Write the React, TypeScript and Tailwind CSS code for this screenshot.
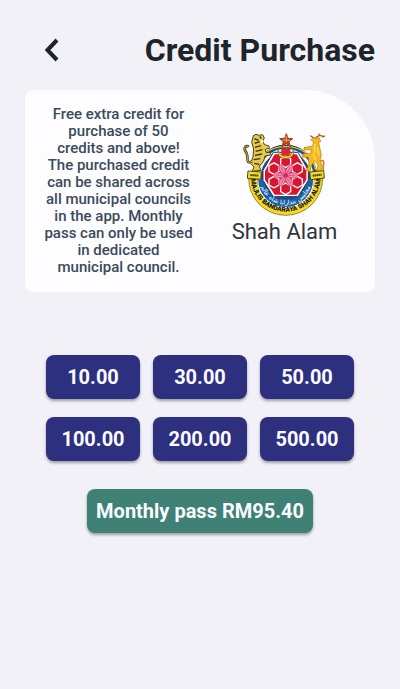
const amounts = ['10.00', '30.00', '50.00', '100.00', '200.00', '500.00'];

const notice = [
  'Free extra credit for',
  'purchase of 50',
  'credits and above!',
  'The purchased credit',
  'can be shared across',
  'all municipal councils',
  'in the app. Monthly',
  'pass can only be used',
  'in dedicated',
  'municipal council.',
];

const petals = [0, 60, 120, 180, 240, 300];

function Crest() {
  return (
    <svg viewBox="33 21 264 255" className="h-[85px] w-[88px]" role="img" aria-label="Majlis Bandaraya Shah Alam crest">
      <defs>
        <path id="motto" d="M62 152 A105 105 0 1 0 272 152" />
        <path id="jawi" d="M89 158 A78 78 0 0 0 245 158" />
      </defs>
      {/* shield rings */}
      <circle cx="167" cy="150" r="92" fill="#174f93" stroke="#172a3d" strokeWidth="4" />
      <circle cx="167" cy="152" r="79" fill="none" stroke="#f4f5ef" strokeWidth="9" />
      <path d="M78 132 C86 87 116 63 167 61 C218 63 248 87 257 132" fill="none" stroke="#e5c820" strokeWidth="4" />
      <path d="M56 157 A111 111 0 0 0 278 157 L252 157 A85 85 0 0 1 82 157Z" fill="#f7d921" stroke="#5b5524" strokeWidth="2" />
      <path d="M84 162 A83 83 0 0 0 250 162" fill="none" stroke="#fff" strokeWidth="4" />
      <path d="M94 160 A73 73 0 0 0 240 160" fill="none" stroke="#1764ab" strokeWidth="19" />
      {/* hexagonal field */}
      <path d="M130 79 H204 L235 133 V163 L204 212 H130 L99 163 V133Z" fill="#fff" stroke="#20365b" strokeWidth="3" strokeLinejoin="round" />
      <path d="M134 85 H200 L229 135 V161 L200 206 H134 L105 161 V135Z" fill="#d91632" strokeLinejoin="round" />
      <g fill="none" stroke="#fff" strokeWidth="4">
        {petals.map((a) => (
          <path key={a} transform={`rotate(${a} 167 148)`} d="M167 125 L152 116 V99 L167 90 L182 99 V116Z" />
        ))}
      </g>
      {petals.map((a) => (
        <g key={a} transform={`rotate(${a + 30} 167 148)`}>
          <ellipse cx="167" cy="128" rx="8" ry="16" fill="#f58aae" stroke="#c62e61" strokeWidth="2" />
          <path d="M167 143V120" stroke="#d8396d" strokeWidth="2" />
        </g>
      ))}
      <circle cx="167" cy="148" r="6" fill="#cf2860" />
      {/* crescent and star */}
      <path d="M145 68 C145 98 190 98 190 68 C202 107 133 108 145 68Z" fill="#f2dd27" stroke="#745d1d" strokeWidth="2" />
      <path d="M154 67H181V83Q167 91 154 83Z" fill="#d9243a" />
      <path d="M169 23 L174 37 L188 38 L177 47 L181 62 L169 53 L156 62 L160 47 L149 38 L164 37Z" fill="#d73422" stroke="#8c4c2b" strokeWidth="3" />
      <path d="M169 30V49M158 42L180 43" stroke="#f3b14c" strokeWidth="3" />
      {/* tiger supporter */}
      <path d="M70 29 L78 25 88 28 98 26 103 36 98 46 104 56 117 60 118 67 106 70 108 79 122 80 122 87 105 90 101 105 88 121 93 133 66 136 72 123 62 112 69 92 71 69 65 49Z" fill="#e6c947" stroke="#4c4424" strokeWidth="3" />
      <path d="M66 106 C43 117 59 91 47 77 C39 65 50 56 56 63" fill="none" stroke="#4c4424" strokeWidth="8" />
      <path d="M66 106 C43 117 59 91 47 77 C39 65 50 56 56 63" fill="none" stroke="#d6b743" strokeWidth="3" />
      <path d="M73 38l13 5M74 52l15-5M75 64l18-5M77 76l20-5M75 88l21-4M71 101l20-3M73 112l15 3M89 31l5 7" fill="none" stroke="#353424" strokeWidth="4" />
      <path d="M92 43l7-3v11l-8 1Z" fill="#fff5bd" />
      {/* deer supporter */}
      <path d="M242 42 L250 35 268 36 272 46 266 50 270 69 274 86 270 104 277 120 271 138 261 132 264 117 254 104 244 119 240 137 228 134 237 116 235 94 216 93 220 83 241 83 245 71 222 72 222 65 248 60 251 48Z" fill="#f5b91f" stroke="#ad7612" strokeWidth="2" />
      <path d="M251 36 241 29 M257 35 269 28 280 31M269 29l-3-6M276 33l9-3" fill="none" stroke="#a36a24" strokeWidth="4" />
      <path d="M270 105 C292 97 274 128 281 135" fill="none" stroke="#c98c1b" strokeWidth="5" />
      <path d="M254 54v26M249 85l9 19M263 65l4 23" fill="none" stroke="#ffe062" strokeWidth="4" />
      {/* side ribbons */}
      <path d="M54 135 L94 138 92 160 52 157Z" fill="#f6db22" stroke="#514a20" strokeWidth="3" />
      <path d="M239 138 L281 134 283 156 242 161Z" fill="#f6db22" stroke="#514a20" strokeWidth="3" />
      <path d="M61 147 L86 149 M248 149 L275 146" stroke="#4a4325" strokeWidth="6" strokeDasharray="5 1" />
      <text fill="#fff" className="font-['DejaVu_Sans',sans-serif] text-[19px]">
        <textPath href="#jawi" startOffset="50%" textAnchor="middle">مجليس بندارايا شاه عالم</textPath>
      </text>
      <text fill="#161812" className="font-[Roboto,sans-serif] text-[20px] font-black">
        <textPath href="#motto" startOffset="50%" textAnchor="middle">MAJLIS BANDARAYA SHAH ALAM</textPath>
      </text>
    </svg>
  );
}

export default function App() {
  return (
    <main className="min-h-screen bg-[#f2f1f8] px-[25px] pt-8 pb-8 font-[Roboto,sans-serif]">
      <header className="flex items-center justify-between">
        <button type="button" aria-label="Back" className="flex h-9 w-[54px] items-center justify-center">
          <svg viewBox="0 0 16 24" className="h-6 w-4" fill="none" stroke="#1b252a" strokeWidth="4">
            <path d="M13 2 L3.5 12 L13 22" />
          </svg>
        </button>
        <h1 className="text-[32px] leading-9 font-bold text-[#1b252a]">Credit Purchase</h1>
      </header>

      <section className="mt-[22px] grid grid-cols-2 items-center rounded-lg rounded-tr-[70px] bg-[#fdfcff] px-3 py-4">
        <p className="text-center text-[15px] leading-[17px] font-medium text-[#3b4b5a]">
          {notice.map((line) => (
            <span key={line} className="block whitespace-nowrap">{line} </span>
          ))}
        </p>
        <div className="flex flex-col items-center pb-[3px] pl-1.5">
          <Crest />
          <h2 className="text-[22px] leading-7 text-[#30343b]">Shah Alam</h2>
        </div>
      </section>

      <div className="mx-[21px] mt-[63px] grid grid-cols-3 gap-x-[13px] gap-y-[18px]">
        {amounts.map((amount) => (
          <button
            key={amount}
            type="button"
            className="h-11 rounded-lg bg-[#2d2f7f] text-[20px] leading-6 font-bold text-[#fafaff] shadow-[0_2px_3px_rgba(0,0,0,0.35)]"
          >
            {amount}
          </button>
        ))}
      </div>

      <div className="mt-7 flex justify-center">
        <button
          type="button"
          className="h-11 rounded-lg bg-[#3f8174] px-[9px] text-[20px] leading-6 font-bold text-[#fafaff] shadow-[0_2px_3px_rgba(0,0,0,0.35)]"
        >
          Monthly pass RM95.40
        </button>
      </div>
    </main>
  );
}
